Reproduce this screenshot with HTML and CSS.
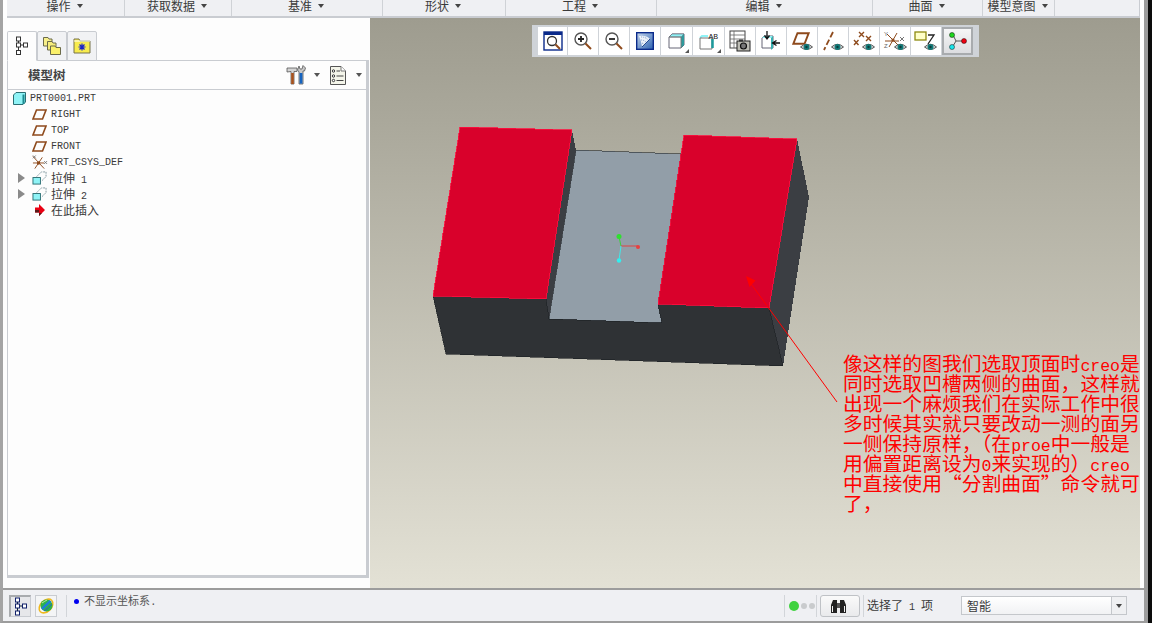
FILE: index.html
```html
<!DOCTYPE html>
<html lang="zh-CN">
<head>
<meta charset="utf-8">
<title>模型树</title>
<link rel="stylesheet" href="styles.css">
</head>
<body>
<svg class="defs" width="0" height="0" aria-hidden="true">
  <symbol id="eye" viewBox="0 0 13 8">
    <path d="M0.5 4Q6.5 -1.5 12.5 4Q6.5 9 0.5 4Z" fill="#d8dadc" stroke="#555"/>
    <circle cx="6.5" cy="4" r="3" fill="#127a78"/>
    <circle cx="6.5" cy="4" r="1.2" fill="#0b3c3c"/>
  </symbol>
  <symbol id="datum" viewBox="0 0 15 11">
    <path d="M4.5 1H14L10.5 10H1Z" fill="none" stroke="#8e4a1c" stroke-width="1.6"/>
  </symbol>
  <symbol id="extrude" viewBox="0 0 16 15">
    <path d="M5 6 10 1H15V6L10 11" fill="none" stroke="#7d959c" stroke-dasharray="2 1"/>
    <rect x="1" y="7" width="8" height="7" fill="#8ff3f6" stroke="#2b6d72"/>
  </symbol>
</svg>
<div class="window">
  <div class="main">
    <nav class="menu">
      <div class="menu-item">操作<i class="caret"></i></div>
      <div class="menu-item">获取数据<i class="caret"></i></div>
      <div class="menu-item">基准<i class="caret"></i></div>
      <div class="menu-item">形状<i class="caret"></i></div>
      <div class="menu-item">工程<i class="caret"></i></div>
      <div class="menu-item">编辑<i class="caret"></i></div>
      <div class="menu-item">曲面<i class="caret"></i></div>
      <div class="menu-item">模型意图<i class="caret"></i></div>
      <div class="menu-item"></div>
    </nav>
    <div class="workspace">
      <aside class="side">
        <div class="tabs">
          <div class="tab tab-active">
            <svg width="14" height="20" viewBox="0 0 14 20"><path d="M3.5 5V7M3.5 11V15M6 9H9" stroke="#333" fill="none"/><rect x="1.5" y="1" width="4" height="4" fill="#fff" stroke="#333"/><rect x="1.5" y="7" width="4" height="4" fill="#fff" stroke="#333"/><rect x="8.5" y="7" width="4" height="4" fill="#fff" stroke="#333"/><rect x="1.5" y="14.5" width="4" height="4" fill="#fff" stroke="#333"/></svg>
          </div>
          <div class="tab">
            <svg width="20" height="20" viewBox="0 0 20 20"><path d="M1.5 3V1.5H6L7 3H10V10H1.5Z" fill="#f7ef8a" stroke="#6b6a4a"/><path d="M5.5 8V5.5H10L11 7H14V14H5.5Z" fill="#f5ec7a" stroke="#6b6a4a"/><path d="M8.5 12V10H13L14 11.5H18.5V18.5H8.5Z" fill="#faf06a" stroke="#6b6a4a"/></svg>
          </div>
          <div class="tab">
            <svg width="18" height="16" viewBox="0 0 18 16"><path d="M1 3V1H6L7 3H17V15H1Z" fill="#f8ec4e" stroke="#76724a"/><path d="M1 3H17" stroke="#fff"/><path d="M9 5.5V12.5M5.5 9H12.5M6.5 6.5 11.5 11.5M11.5 6.5 6.5 11.5" stroke="#1a22c8" stroke-width="1.2"/></svg>
          </div>
        </div>
        <section class="panel">
          <header class="panel-head">
            <h2 class="panel-title">模型树</h2>
            <div class="panel-tools">
              <svg class="tool-icon" width="20" height="20" viewBox="0 0 20 20"><path d="M1 3H11V6.5H8V19H5V6.5L1 7Z" fill="#d4d4d4" stroke="#555" stroke-width=".8"/><rect x="5.2" y="8" width="2.6" height="11" fill="#a8521c"/><path d="M13 1 14 4 16 4 17 0.5 19.5 3 18.5 6H17V19H13V7L11.5 5Z" fill="#c8c8c8" stroke="#555" stroke-width=".8"/><rect x="13.6" y="8" width="2.8" height="10.6" fill="#1664c0"/></svg>
              <i class="caret tool-caret"></i>
              <svg class="list-icon" width="16" height="19" viewBox="0 0 16 19"><path d="M.5.5H11L15.5 5V18.5H.5Z" fill="#f4f5ea" stroke="#555"/><path d="M11 .5V5H15.5" fill="#fff" stroke="#777"/><g fill="#fff" stroke="#333"><circle cx="3.5" cy="5" r="1.2"/><circle cx="3.5" cy="10" r="1.2"/><circle cx="3.5" cy="14.5" r="1.2"/></g><path d="M6.5 5H10M6.5 10H13.5M6.5 14.5H13.5" stroke="#444"/></svg>
              <i class="caret tool-caret-last"></i>
            </div>
          </header>
          <ul class="tree">
            <li class="row row-root">
              <svg width="13" height="13" viewBox="0 0 13 13"><path d="M.5 3 3 .5H12.5V10L10 12.5H.5Z" fill="#8ff3f6" stroke="#2b6d72"/><path d="M10.5 2.5V12" stroke="#1d8a90" stroke-width="2"/></svg>
              <span class="label">PRT0001.PRT</span>
            </li>
            <li class="row"><i class="exp"></i><svg class="ti" width="15" height="11"><use href="#datum"/></svg><span class="label">RIGHT</span></li>
            <li class="row"><i class="exp"></i><svg class="ti" width="15" height="11"><use href="#datum"/></svg><span class="label">TOP</span></li>
            <li class="row"><i class="exp"></i><svg class="ti" width="15" height="11"><use href="#datum"/></svg><span class="label">FRONT</span></li>
            <li class="row"><i class="exp"></i>
              <svg class="ti" width="16" height="15" viewBox="0 0 16 15"><path d="M1 1 13 14M11 2 3 14M1 8H13" stroke="#8e4a1c" fill="none"/><circle cx="7" cy="8" r="1.8" fill="#8e4a1c"/><path d="M13 6 16 9M16 6 13 9M1 0 4 3M4 0 1 3" stroke="#777" fill="none"/></svg>
              <span class="label">PRT_CSYS_DEF</span></li>
            <li class="row"><i class="exp exp-on"></i><svg class="ti" width="15" height="14" viewBox="0 0 16 15"><use href="#extrude"/></svg><span class="label label-cjk"><span class="cjk">拉伸</span> 1</span></li>
            <li class="row"><i class="exp exp-on"></i><svg class="ti" width="15" height="14" viewBox="0 0 16 15"><use href="#extrude"/></svg><span class="label label-cjk"><span class="cjk">拉伸</span> 2</span></li>
            <li class="row"><i class="exp"></i>
              <svg class="ti" width="15" height="12" viewBox="0 0 15 12"><path d="M3 3.5H7V0L13 6 7 12V8.5H3Z" fill="#e80012"/><path d="M3 6H7V9 L10 9 7 12V8.5H3Z" fill="#5a1a1a"/></svg>
              <span class="label label-cjk"><span class="cjk">在此插入</span></span></li>
          </ul>
        </section>
      </aside>
      <div class="canvas">
        <svg class="scene" viewBox="370 18 770 570" width="770" height="570" shape-rendering="crispEdges">
          <polygon points="576,150 681,154 658,304 662,323 549,319" fill="#929ea8" stroke="#22262a" stroke-width=".6"/>
          <polygon points="572,130 576,150 549,319 546,299" fill="#3b3e43"/>
          <polygon points="797,139 809,197 783,366 769,308" fill="#3b3e43"/>
          <polygon points="433,296 546,299 549,319 662,323 658,304 769,308 783,366 446,354" fill="#2f3235" stroke="#1d2023" stroke-width=".6"/>
          <polygon points="460,127 572,130 546,299 433,296" fill="#d9012b" stroke="#ff1040" stroke-width=".8"/>
          <polygon points="684,135 797,139 769,308 658,304" fill="#d9012b" stroke="#ff1040" stroke-width=".8"/>
          <g shape-rendering="auto">
            <path d="M621 246 619 237" stroke="#3bd33b" stroke-width="1"/>
            <path d="M621 246H638" stroke="#e04040" stroke-width="1"/>
            <path d="M621 246 619 260" stroke="#40e8e8" stroke-width="1"/>
            <circle cx="619" cy="236.500" r="2.500" fill="#2fe02f"/>
            <circle cx="638" cy="247" r="2" fill="#e84040"/>
            <circle cx="619" cy="260.500" r="2.200" fill="#30f0f0"/>
            <path d="M837 402 749 281" stroke="#f00" stroke-width="1" fill="none"/>
            <polygon points="746,276 755.500,280.500 749.500,287" fill="#f00"/>
          </g>
        </svg>
        <div class="toolbar">
          <button class="tb">
            <svg width="20" height="20" viewBox="0 0 20 20"><rect x="1" y="1" width="18" height="18" fill="#fff" stroke="#0a2a8a" stroke-width="1.4"/><rect x="1" y="1" width="18" height="3" fill="#0a2a8a"/><circle cx="9" cy="10" r="4.500" fill="#fff" stroke="#333" stroke-width="1.300"/><path d="M12.500 13.500 17 18" stroke="#8e4a1c" stroke-width="2"/></svg>
          </button>
          <button class="tb">
            <svg width="20" height="20" viewBox="0 0 20 20"><circle cx="8" cy="8" r="6" fill="#fff" stroke="#555" stroke-width="1.400"/><path d="M5 8H11M8 5V11" stroke="#222" stroke-width="1.800"/><path d="M12.500 12.500 18 18" stroke="#8e4a1c" stroke-width="2"/></svg>
          </button>
          <button class="tb">
            <svg width="20" height="20" viewBox="0 0 20 20"><circle cx="8" cy="8" r="6" fill="#fff" stroke="#555" stroke-width="1.400"/><path d="M5 8H11" stroke="#222" stroke-width="1.800"/><path d="M12.500 12.500 18 18" stroke="#8e4a1c" stroke-width="2"/></svg>
          </button>
          <button class="tb">
            <svg width="18" height="18" viewBox="0 0 18 18"><defs><linearGradient id="rp" x1="0" y1="0" x2="1" y2="1"><stop offset="0" stop-color="#c8d8ec"/><stop offset="1" stop-color="#2a60b0"/></linearGradient></defs><rect x=".7" y=".7" width="16.600" height="16.600" fill="url(#rp)" stroke="#0a2a8a" stroke-width="1.400"/><path d="M3 4Q10 3 14 7L6 15Q5 8 3 4Z" fill="#fff" opacity=".85"/><path d="M5 5Q10 5 12 8M5 8Q8 8 10 10M6 11 8 12" stroke="#7f9ccc" fill="none" stroke-dasharray="1 1"/><path d="M6 15 14 7" stroke="#234a90"/></svg>
          </button>
          <button class="tb tb-corner">
            <svg width="18" height="18" viewBox="0 0 18 18"><path d="M1 5 4 2H16V13L13 16H1Z" fill="#fff" stroke="#667"/><path d="M1 5 4 2H16L13 5Z" fill="#8ff3f6" stroke="#667" stroke-width=".6"/><path d="M13 5 16 2V13L13 16Z" fill="#2e9a9c"/><path d="M1 5H13V16" fill="none" stroke="#777"/></svg>
          </button>
          <button class="tb tb-corner">
            <svg width="20" height="18" viewBox="0 0 20 18"><path d="M1 6 3 4H9" fill="none" stroke="#8ff3f6" stroke-width="2"/><path d="M1 6H13V17H1Z" fill="#fff" stroke="#777"/><path d="M13.500 7V16" stroke="#1d9a9c" stroke-width="2.500"/><text class="ab" x="9.500" y="7">AB</text></svg>
          </button>
          <button class="tb">
            <svg width="22" height="22" viewBox="0 0 22 22"><rect x="1" y="1" width="15" height="17" fill="#fff" stroke="#444"/><path d="M1 5H16M1 9H16M1 13H16M5 1V18" stroke="#666" stroke-width=".8"/><rect x="8" y="11" width="13" height="10" fill="#bdbdb5" stroke="#222"/><circle cx="14.500" cy="16" r="3" fill="#777" stroke="#111" stroke-width="1.200"/><rect x="10" y="9.500" width="4" height="2" fill="#333"/></svg>
          </button>
          <button class="tb">
            <svg width="20" height="22" viewBox="0 0 20 22"><path d="M1 8 3 6H12V18H1Z" fill="#fff" stroke="#667"/><path d="M1 8 3 6H12L10 8Z" fill="#8ff3f6"/><path d="M10 8 12 6V18L10 20Z" fill="#37b0b0"/><path d="M6 1V8M3.500 5.500 6 9 8.500 5.500" fill="none" stroke="#111" stroke-width="1.300"/><path d="M19 13H12M15.500 10.500 11.500 13 15.500 15.500" fill="none" stroke="#111" stroke-width="1.300"/></svg>
          </button>
          <button class="tb">
            <svg width="22" height="20" viewBox="0 0 22 20"><use href="#datum" x="0" y="1" width="20" height="13"/><use href="#eye" x="9" y="12" width="13" height="8"/></svg>
          </button>
          <button class="tb">
            <svg width="22" height="20" viewBox="0 0 22 20"><path d="M11 1 2 19" stroke="#8e4a1c" stroke-width="1.800" stroke-dasharray="6 2.500" fill="none"/><use href="#eye" x="9" y="12" width="13" height="8"/></svg>
          </button>
          <button class="tb">
            <svg width="22" height="20" viewBox="0 0 22 20"><path d="M6 1 11 6M11 1 6 6M1 9 5.500 14M5.500 9 1 14M13 5 18 10M18 5 13 10" stroke="#8e4a1c" stroke-width="1.400" fill="none"/><use href="#eye" x="9" y="12" width="13" height="8"/></svg>
          </button>
          <button class="tb">
            <svg width="24" height="20" viewBox="0 0 24 20"><path d="M14 2 6 16M4 3 16 15M2 10H16" stroke="#8e4a1c" fill="none"/><circle cx="10" cy="9" r="1.600" fill="#8e4a1c"/><text class="axis" x="1" y="5">Y</text><text class="axis" x="1" y="17">Z</text><path d="M17 6 21 10M21 6 17 10" stroke="#777" fill="none"/><use href="#eye" x="11" y="12" width="13" height="8"/></svg>
          </button>
          <button class="tb">
            <svg width="24" height="20" viewBox="0 0 24 20"><rect x="1" y="1" width="11" height="8" fill="#ffffc8" stroke="#8e8a10" stroke-width="1.300"/><path d="M14 4H20L14 13" fill="none" stroke="#222" stroke-width="1.300"/><use href="#eye" x="10" y="12" width="13" height="8"/></svg>
          </button>
          <button class="tb tb-on">
            <svg width="20" height="18" viewBox="0 0 20 18"><path d="M5 3 8 9 5 14M8 9H16" stroke="#555" fill="none"/><circle cx="4" cy="3" r="2.500" fill="#1ed81e" stroke="#111" stroke-width=".5"/><circle cx="16" cy="9" r="2.500" fill="#f00010" stroke="#111" stroke-width=".5"/><circle cx="4" cy="15" r="2.500" fill="#19e6ec" stroke="#111" stroke-width=".5"/></svg>
          </button>
        </div>
        <div class="note">
          <div class="note-line">像这样的图我们选取顶面时<span class="lat">creo</span>是</div>
          <div class="note-line">同时选取凹槽两侧的曲面&#xFF0C;这样就</div>
          <div class="note-line">出现一个麻烦我们在实际工作中很</div>
          <div class="note-line">多时候其实就只要改动一测的面另</div>
          <div class="note-line">一侧保持原样&#xFF0C;&#xFF08;在<span class="lat">proe</span>中一般是</div>
          <div class="note-line">用偏置距离设为<span class="lat">0</span>来实现的&#xFF09;<span class="lat">creo</span></div>
          <div class="note-line">中直接使用&#x201C;分割曲面&#x201D;命令就可</div>
          <div class="note-line">了&#xFF0C;</div>
        </div>
      </div>
    </div>
    <footer class="status">
      <div class="st-btn st-pressed">
        <svg width="14" height="19" viewBox="0 0 14 19"><path d="M3.500 5V7M3.500 11V14M6 9H9" stroke="#123" fill="none"/><rect x="1.500" y="1" width="4" height="4" fill="#fff" stroke="#10206a"/><rect x="1.500" y="7" width="4" height="4" fill="#fff" stroke="#10206a"/><rect x="8.500" y="7" width="4" height="4" fill="#fff" stroke="#10206a"/><rect x="1.500" y="14" width="4" height="4" fill="#fff" stroke="#10206a"/></svg>
      </div>
      <div class="st-btn">
        <svg width="18" height="18" viewBox="0 0 18 18"><ellipse cx="9" cy="9" rx="8" ry="5.500" transform="rotate(-45 9 9)" fill="none" stroke="#f0b81c" stroke-width="1.500"/><circle cx="9.500" cy="8.500" r="6" fill="#2db34a"/><path d="M5 12Q9 8 13.500 4" stroke="#1e7fd8" stroke-width="2.500" fill="none"/><path d="M7 14Q12 11 15 7" stroke="#2a60c0" fill="none"/><path d="M5 6Q8 4 10 3" stroke="#bfe8a0" fill="none"/></svg>
      </div>
      <div class="st-sep st-sep-a"></div>
      <i class="msg-dot"></i>
      <span class="msg"><span class="msg-cjk">不显示坐标系</span>.</span>
      <div class="st-right">
        <div class="st-sep"></div>
        <div class="lights"><i class="l-on"></i><i class="l-off"></i><i class="l-off"></i></div>
        <div class="st-sep"></div>
        <button class="find">
          <svg class="find-icon" width="17" height="15" viewBox="0 0 17 15"><path d="M3 1H7V14H1V6Z" fill="#222"/><path d="M14 1H10V14H16V6Z" fill="#222"/><rect x="7" y="4" width="3" height="5" fill="#555"/><path d="M2.500 7V13M14.500 7V13" stroke="#f2f2f2"/></svg>
        </button>
        <div class="st-sep"></div>
        <span class="sel"><span class="cjk">选择了</span> 1 <span class="cjk">项</span></span>
        <div class="combo"><span class="combo-val">智能</span><span class="combo-btn"><i class="caret"></i></span></div>
      </div>
    </footer>
  </div>
</div>
</body>
</html>
```
FILE: styles.css
```css
* { box-sizing: border-box; }
html, body { margin: 0; height: 100%; overflow: hidden; }
body { background: #0c0c0c; font-family: "Noto Sans CJK SC", "Liberation Sans", sans-serif; color: #3c3c3c; }
.defs { position: absolute; }
.window { width: 1148px; height: 623px; background: #fff; border-left: 3px solid #a4a4a4; border-right: 4px solid #9c9c9c; border-bottom: 2px solid #9c9c9c; }
.main { height: 621px; display: flex; flex-direction: column; }

.menu { height: 18px; margin: 0 4px; flex: none; display: grid; grid-template-columns: 117px 107px 151px 123px 151px 216px 110px 72px 86px; background: #eff0f3; border-bottom: 2px solid #c9ccd1; border-right: 1px solid #c9ccd1; overflow: hidden; }
.menu-item { display: flex; justify-content: center; gap: 6px; padding-right: 2px; font-size: 12px; line-height: 11px; color: #3a3a3a; border-left: 1px solid #cfd2d6; }
.menu-item:first-child { border-left: 0; }
.caret { display: inline-block; width: 0; height: 0; border-style: solid; border-width: 4px 3.5px 0; border-color: #444 transparent transparent; }
.menu-item .caret { margin-top: 4px; }

.workspace { flex: 1; min-height: 0; display: flex; background: #fff; padding-right: 4px; }
.side { width: 367px; flex: none; padding: 13px 1px 10px 4px; display: flex; flex-direction: column; background: #fdfdfd; }
.tabs { display: flex; height: 30px; flex: none; position: relative; margin-bottom: -1px; z-index: 1; }
.tab { width: 30px; height: 30px; display: flex; align-items: center; justify-content: center; background: #f1f2f4; border: 1px solid #c9ccd1; border-bottom: 1px solid #c9ccd1; border-radius: 2px 2px 0 0; }
.tab-active { background: #fdfdfd; border-bottom-color: #fdfdfd; }
.panel { flex: 1; display: flex; flex-direction: column; min-height: 0; background: #fdfdfd; border: 1px solid #c9ccd1; border-right-width: 3px; border-bottom-width: 3px; }
.panel-head { height: 29px; flex: none; display: flex; align-items: center; justify-content: space-between; border-bottom: 1px solid #c9ccd1; padding-left: 20px; }
.panel-title { margin: 0; font-size: 12.500px; font-weight: 700; color: #444; line-height: 1; }
.panel-tools { display: flex; align-items: center; }
.tool-caret { margin-left: 8px; margin-right: 10px; }
.tool-caret-last { margin-left: 10px; margin-right: 4px; }
.panel-tools .caret { border-color: #555 transparent transparent; }
.tree { list-style: none; margin: 0; padding: 0; }
.row { height: 16px; display: flex; align-items: center; padding-left: 10px; font-family: "Liberation Mono", "Noto Sans CJK SC", monospace; font-size: 10px; color: #3a3a3a; }
.row-root { padding-left: 5px; }
.row-root .label { margin-left: 4px; }
.exp { width: 14px; flex: none; }
.exp-on { width: 0; height: 0; border-style: solid; border-width: 5px 0 5px 7px; border-color: transparent transparent transparent #8a8a8a; margin-right: 7px; }
.ti { flex: none; width: 15px; overflow: visible; }
.label { margin-left: 4px; white-space: pre; }
.label-cjk { margin-bottom: 2px; }
.cjk { font-family: "Noto Sans CJK SC", sans-serif; font-size: 12px; }

.canvas { position: relative; width: 770px; flex: none; background: linear-gradient(#9e9c8f 0%, #aaa89b 18%, #e3e1d5 100%); }
.scene { display: block; }
.toolbar { position: absolute; left: 162px; top: 7px; height: 32px; width: 447px; display: flex; padding: 2px 6px; background: #cfd3d8; }
.tb { width: 31px; height: 28px; padding: 0; margin: 0; border: 0; border-right: 1px solid #cfd3d8; background: #fff; display: flex; align-items: center; justify-content: center; position: relative; flex: none; }
.tb:first-child { width: 30px; }
.tb:nth-child(5), .tb:nth-child(6) { width: 32px; }
.tb-corner::after { content: ""; position: absolute; right: 3px; bottom: 2px; border-style: solid; border-width: 0 0 4px 4px; border-color: transparent transparent #555 transparent; }
.tb-on { background: linear-gradient(#f6f6f7, #dcdde0); border: 2px solid #a8abae; }
.ab { font: 8px "Liberation Mono", monospace; fill: #222; }
.axis { font: 6px "Liberation Sans", sans-serif; fill: #666; }
.note { position: absolute; left: 473px; top: 335px; width: 300px; color: #f00; }
.note-line { height: 20px; font-size: 19.800px; line-height: 20px; white-space: nowrap; overflow: visible; }
.lat { font-family: "Liberation Mono", monospace; font-size: 16.500px; }

.status { height: 33px; flex: none; display: flex; align-items: flex-start; background: #eff0f3; border-top: 2px solid #9c9c9c; padding: 5px 0 0 6px; }
.st-btn { width: 22px; height: 22px; display: flex; align-items: center; justify-content: center; border: 1px solid #c9ccd1; background: #f4f5f6; margin-right: 4px; }
.st-pressed { background: #e6e7ea; border-top: 2px solid #a8abae; border-left: 2px solid #a8abae; }
.st-sep { width: 1px; height: 22px; background: #d2d5d9; flex: none; }
.st-sep-a { margin-left: 5px; }
.msg-dot { width: 5px; height: 5px; border-radius: 50%; background: #0000f0; margin: 4px 0 0 7px; flex: none; }
.msg { margin: -3px 0 0 5px; font-family: "Liberation Mono", monospace; font-size: 11px; line-height: 16px; color: #555; }
.msg-cjk { font-family: "Noto Sans CJK SC", sans-serif; }
.st-right { margin-left: auto; display: flex; align-items: flex-start; padding-right: 17px; }
.lights { width: 31px; height: 22px; display: flex; align-items: center; padding-left: 4px; gap: 2px; }
.l-on { width: 10px; height: 10px; border-radius: 50%; background: #3fd23f; }
.l-off { width: 6px; height: 6px; border-radius: 50%; background: #c9cbcd; }
.find { width: 40px; height: 22px; padding: 0; margin: 0 3px; border: 1px solid #bfc2c6; border-radius: 3px; background: linear-gradient(#fafafa, #e9eaec); display: flex; align-items: center; justify-content: center; }
.find-icon { margin-right: 4px; }
.sel { margin-left: 3px; width: 94px; flex: none; font-family: "Liberation Mono", monospace; font-size: 10px; line-height: 20px; white-space: pre; color: #3a3a3a; }
.combo { width: 166px; height: 19px; margin-top: 1px; display: flex; align-items: center; justify-content: space-between; border: 1px solid #c4c7cb; background: linear-gradient(#fff, #f1f2f4); font-size: 12px; color: #3a3a3a; }
.combo-val { margin-left: 5px; }
.combo-btn { width: 15px; height: 17px; flex: none; display: flex; align-items: center; justify-content: center; border-left: 1px solid #c4c7cb; background: #eff0f2; }
```
